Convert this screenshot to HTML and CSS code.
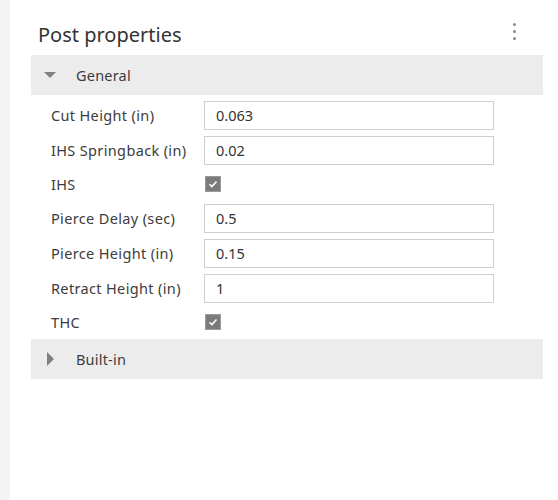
FILE: index.html
```html
<!DOCTYPE html>
<html>
<head>
<meta charset="utf-8">
<link rel="stylesheet" href="styles.css">
</head>
<body>
<div class="page">
  <div class="strip"></div>
  <div class="main">
    <div class="title-bar">
      <h1 class="title">Post properties</h1>
      <button class="kebab" aria-label="More">
        <span class="dot"></span><span class="dot"></span><span class="dot"></span>
      </button>
    </div>

    <div class="group">
      <div class="group-head">
        <svg class="caret" width="12" height="8" viewBox="0 0 12 8"><polygon points="0,1 12,1 6,7" fill="#808080"/></svg>
        <span class="group-name">General</span>
      </div>
      <div class="rows">
        <div class="row"><span class="label">Cut Height (in)</span><input class="field" type="text" value="0.063"></div>
        <div class="row"><span class="label">IHS Springback (in)</span><input class="field" type="text" value="0.02"></div>
        <div class="row cbrow"><span class="label">IHS</span><span class="check"><svg width="16" height="16" viewBox="0 0 16 16"><path d="M4 8.3 L6.8 11 L12 5.2" fill="none" stroke="#fff" stroke-width="1.8"/></svg></span></div>
        <div class="row"><span class="label">Pierce Delay (sec)</span><input class="field" type="text" value="0.5"></div>
        <div class="row"><span class="label">Pierce Height (in)</span><input class="field" type="text" value="0.15"></div>
        <div class="row"><span class="label">Retract Height (in)</span><input class="field" type="text" value="1"></div>
        <div class="row cbrow"><span class="label">THC</span><span class="check"><svg width="16" height="16" viewBox="0 0 16 16"><path d="M4 8.3 L6.8 11 L12 5.2" fill="none" stroke="#fff" stroke-width="1.8"/></svg></span></div>
      </div>
    </div>

    <div class="group">
      <div class="group-head">
        <svg class="caret right" width="12" height="14" viewBox="0 0 12 14"><polygon points="3,0 10,7 3,14" fill="#808080"/></svg>
        <span class="group-name">Built-in</span>
      </div>
    </div>
  </div>
</div>
</body>
</html>
```

FILE: styles.css
```css
html, body {
  margin: 0;
  padding: 0;
  background: #fff;
}

body {
  font-family: "Noto Sans", "Open Sans", sans-serif;
  color: #3c3c3c;
}

.page {
  display: flex;
  min-height: 500px;
}

.strip {
  width: 10px;
  flex: 0 0 10px;
  background: #f4f4f4;
}

.main {
  flex: 1;
  padding: 0 15px 0 21px;
}

.title-bar {
  height: 55px;
  display: flex;
  align-items: center;
  justify-content: space-between;
  padding: 0 0 0 7px;
  box-sizing: border-box;
}

.title {
  margin: 0;
  font-size: 20px;
  font-weight: 400;
  color: #333;
  line-height: 24px;
  padding-top: 14px;
}

.kebab {
  border: 0;
  background: none;
  padding: 0;
  margin-right: 27px;
  display: flex;
  flex-direction: column;
  gap: 4px;
  margin-top: 8px;
}

.dot {
  width: 3px;
  height: 3px;
  border-radius: 50%;
  background: #8a8a8a;
  display: block;
}

.group-head {
  height: 40px;
  background: #ececec;
  display: flex;
  align-items: center;
  padding-left: 13px;
}

.caret {
  flex: 0 0 auto;
}

.group-name {
  margin-left: 20px;
  font-size: 14.5px;
  letter-spacing: 0.2px;
  color: #3c3c3c;
}

.rows {
  display: flex;
  flex-direction: column;
  gap: 5px;
  padding: 5px 0 3px;
}

.row {
  height: 30px;
  display: flex;
  align-items: center;
  padding-left: 20px;
}

.cbrow {
  height: 28px;
}

.label {
  width: 153px;
  flex: 0 0 153px;
  font-size: 14.5px;
  letter-spacing: 0.35px;
  color: #3c3c3c;
}

.field {
  width: 290px;
  height: 29px;
  box-sizing: border-box;
  border: 1px solid #cfcfcf;
  border-radius: 0;
  padding: 0 11px;
  font-family: "Noto Sans", "Open Sans", sans-serif;
  font-size: 14.5px;
  color: #333;
  background: #fff;
  outline: none;
  margin: 0;
}

.check {
  width: 16px;
  height: 16px;
  margin-left: 1px;
  box-sizing: border-box;
  background: #7b7b7b;
  border: 1px solid #9a9a9a;
  display: flex;
  align-items: center;
  justify-content: center;
}

.check svg {
  display: block;
}
```
